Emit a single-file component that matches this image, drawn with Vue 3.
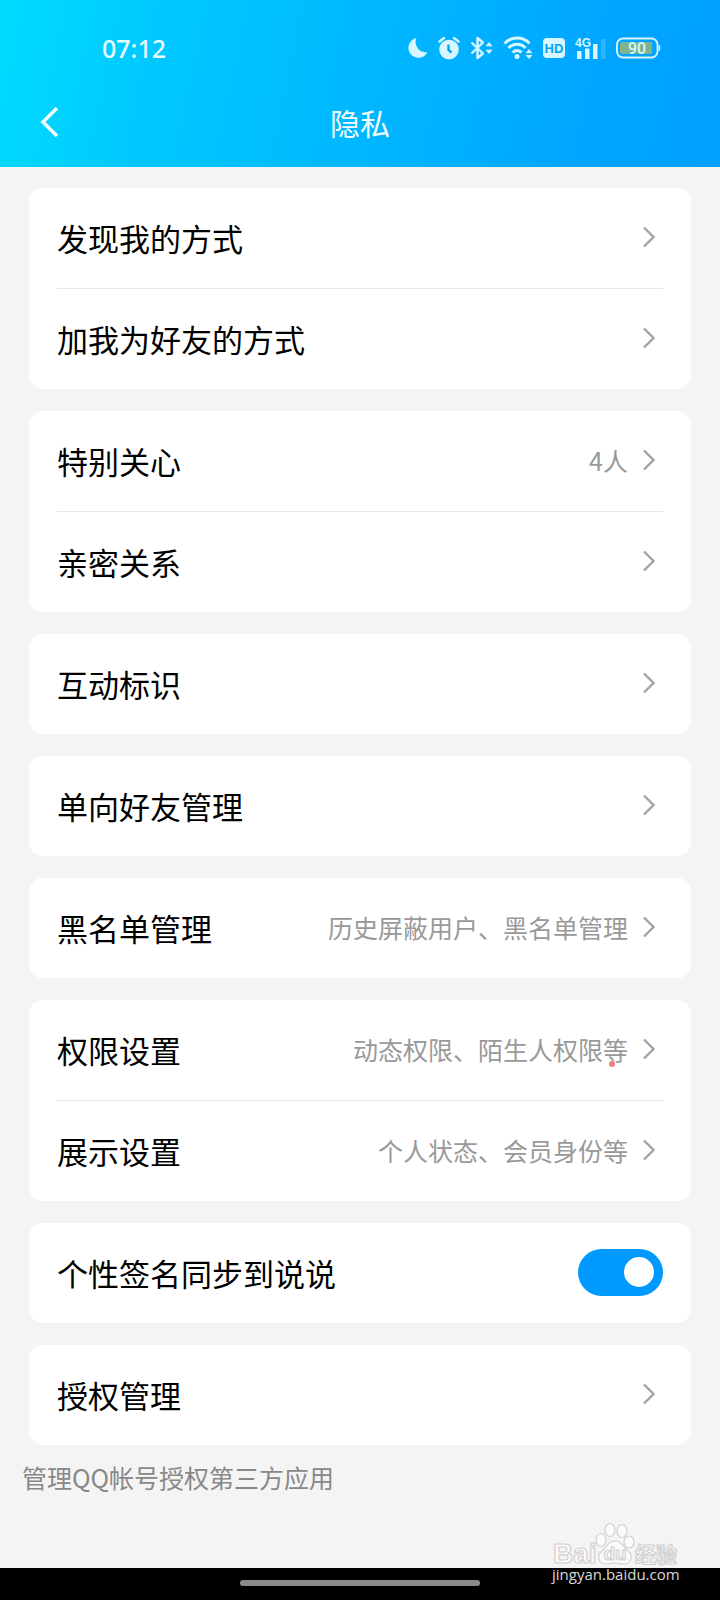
<template>
  <div class="page">
    <header class="header">
      <div class="status-bar">
        <span class="time">07:12</span>
        <div class="status-icons">
          <svg width="20" height="22" viewBox="0 0 20 22">
            <path d="M8.500 1A10 10 0 1 0 19.500 15 10 10 0 0 1 8.500 1Z" fill="currentColor" />
          </svg>
          <svg width="22" height="24" viewBox="0 0 22 24">
            <circle cx="11" cy="13.500" r="9.800" fill="currentColor" />
            <path d="M1.500 5.500 6 2M20.500 5.500 16 2" stroke="currentColor" stroke-width="2.400" stroke-linecap="round" />
            <path d="M10.500 8.500V14l3 2.500" fill="none" stroke="#00a9f0" stroke-width="2.400" />
          </svg>
          <svg width="23" height="24" viewBox="0 0 23 24">
            <path d="M1.500 6.500 13 17.500 7.500 22V2l5.500 4.500L1.500 17.500" fill="none" stroke="currentColor" stroke-width="2.400" stroke-linejoin="round" />
            <path d="m19 6 3.500 4.200h-7zM19 18l3.500-4.200h-7z" fill="currentColor" />
          </svg>
          <svg width="30" height="24" viewBox="0 0 30 24">
            <path d="M1.500 7.500a17 17 0 0 1 25 0M5.500 12a11.500 11.500 0 0 1 17 0M9.500 16.500a6 6 0 0 1 9 0" fill="none" stroke="currentColor" stroke-width="3" />
            <circle cx="14" cy="20.500" r="2.500" fill="currentColor" />
            <path d="m26 13 3.500 4.200h-7zM26 23l3.500-4h-7z" fill="currentColor" />
          </svg>
          <svg width="22" height="20" viewBox="0 0 22 20">
            <rect x="0" y="0" width="22" height="20" rx="4" fill="currentColor" />
            <text x="11" y="15" text-anchor="middle" class="hd-text">HD</text>
          </svg>
          <svg width="31" height="24" viewBox="0 0 31 24">
            <text x="0" y="11" class="net-text">4G</text>
            <path d="M2 15h4.500v8H2zM10 12.500h4.500V23H10zM18 8h4.500v15H18z" fill="currentColor" />
            <path d="M26 3h4.500v20H26z" fill="currentColor" opacity="0.200" />
          </svg>
          <svg width="45" height="22" viewBox="0 0 45 22">
            <rect x="1" y="1.500" width="40.500" height="19" rx="6" fill="none" stroke="currentColor" stroke-width="1.800" />
            <path d="M6 5h30v12H6a2 2 0 0 1-2-2V7a2 2 0 0 1 2-2Z" fill="#7cb48c" />
            <path d="M42.500 7.500c2.500.5 2.500 6.500 0 7z" fill="currentColor" />
            <text x="21" y="17" text-anchor="middle" class="battery-text">90</text>
          </svg>
        </div>
      </div>
      <nav class="nav-bar">
        <button type="button" class="back" aria-label="返回">
          <svg width="20" height="32" viewBox="0 0 20 32">
            <path d="M17 2 3 16l14 14" fill="none" stroke="currentColor" stroke-width="3.600" />
          </svg>
        </button>
        <h1>隐私</h1>
      </nav>
    </header>

    <main class="content">
      <section v-for="(group, i) in groups" :key="i" class="card">
        <template v-for="item in group" :key="item.title">
          <label v-if="item.toggle" class="row">
            <span class="title">{{ item.title }}</span>
            <input type="checkbox" class="switch" v-model="syncSignature" />
          </label>
          <a v-else href="#" class="row" @click.prevent>
            <span class="title">{{ item.title }}</span>
            <span class="value" :class="{ dotted: item.dot }">{{ item.value }}</span>
            <svg class="chevron" width="12" height="22" viewBox="0 0 12 22">
              <path d="m1 1.500 9.500 9.500L1 20.500" fill="none" stroke="currentColor" stroke-width="2.400" />
            </svg>
          </a>
        </template>
      </section>
      <p class="hint">管理QQ帐号授权第三方应用</p>
    </main>

    <footer class="home-bar">
      <span class="home-pill"></span>
    </footer>

    <div class="watermark">
      <svg width="132" height="50" viewBox="0 0 132 50">
        <g class="mark">
          <text x="1" y="41" class="mark-latin">Bai</text>
          <ellipse cx="49" cy="18" rx="5" ry="6.500" />
          <ellipse cx="58" cy="8" rx="5" ry="6.500" />
          <ellipse cx="70" cy="9" rx="5" ry="6.500" />
          <ellipse cx="77" cy="20" rx="5" ry="6" />
          <path d="M63 19c7 0 8 6 13 10 6 5 3 13-4 13-4 0-6-1-9-1s-5 1-9 1c-7 0-10-8-4-13 5-4 6-10 13-10Z" />
          <text x="63" y="38" text-anchor="middle" class="mark-du">du</text>
          <text x="83" y="40" class="mark-cjk">经验</text>
        </g>
      </svg>
      <span class="mark-url">jingyan.baidu.com</span>
    </div>
  </div>
</template>

<script setup>
import { ref } from 'vue'

const syncSignature = ref(true)

const groups = [
  [{ title: '发现我的方式' }, { title: '加我为好友的方式' }],
  [{ title: '特别关心', value: '4人' }, { title: '亲密关系' }],
  [{ title: '互动标识' }],
  [{ title: '单向好友管理' }],
  [{ title: '黑名单管理', value: '历史屏蔽用户、黑名单管理' }],
  [
    { title: '权限设置', value: '动态权限、陌生人权限等', dot: true },
    { title: '展示设置', value: '个人状态、会员身份等' }
  ],
  [{ title: '个性签名同步到说说', toggle: true }],
  [{ title: '授权管理' }]
]
</script>

<style>
body {
  background: #f4f4f4;
}
</style>

<style scoped>
.page {
  position: relative;
  display: flex;
  flex-direction: column;
  min-height: 100vh;
  background: #f4f4f4;
  font-family: "Noto Sans CJK SC", sans-serif;
}

.header {
  padding-top: 20px;
  background: linear-gradient(102deg, #00dcff 0%, #00c8ff 22%, #00a5ff 82%, #00a0ff 100%);
  color: #d8f6ff;
}

.status-bar {
  display: flex;
  align-items: center;
  justify-content: space-between;
  height: 56px;
  padding: 0 59px 0 102px;
}

.time {
  color: #e8fcff;
  font-family: "Noto Sans", sans-serif;
  font-size: 25px;
  font-weight: 500;
}

.status-icons {
  display: flex;
  align-items: center;
  gap: 10px;
}

.hd-text {
  font: bold 13px "Liberation Sans", sans-serif;
  fill: #00a5f5;
}

.net-text {
  font: bold 12px "Liberation Sans", sans-serif;
  fill: currentColor;
}

.battery-text {
  font: 500 16px Roboto, sans-serif;
  fill: currentColor;
}

.nav-bar {
  display: grid;
  grid-template-columns: 60px 1fr 60px;
  align-items: center;
  height: 91px;
}

.back {
  display: flex;
  justify-content: flex-end;
  padding: 0;
  border: none;
  background: none;
  color: #f0fdff;
  cursor: pointer;
}

h1 {
  margin: 0;
  color: #f0fdff;
  font-size: 30px;
  font-weight: 400;
  line-height: 40px;
  text-align: center;
}

.content {
  display: flex;
  flex: 1;
  flex-direction: column;
  gap: 22px;
  padding: 21px 29px;
}

.card {
  padding: 0 28px;
  border-radius: 14px;
  background: #fff;
}

.row {
  display: flex;
  align-items: center;
  box-sizing: content-box;
  height: 98px;
  padding-bottom: 2px;
  color: #000;
  text-decoration: none;
  cursor: pointer;
}

.row + .row {
  border-top: 1px solid #e8e8e8;
}

.title {
  flex: 1;
  font-size: 31px;
  font-weight: 400;
}

.value {
  position: relative;
  color: #999;
  font-size: 25px;
  font-weight: 400;
}

.dotted::after {
  content: "";
  position: absolute;
  right: 13px;
  bottom: 0;
  width: 6px;
  height: 6px;
  border-radius: 50%;
  background: #ec8080;
}

.chevron {
  margin: 0 8px 0 15px;
  color: #a3a3a3;
}

.switch {
  display: flex;
  align-items: center;
  justify-content: flex-end;
  width: 85px;
  height: 47px;
  margin: 0;
  padding: 0 9px;
  border-radius: 24px;
  background: #ccc;
  appearance: none;
  cursor: pointer;
}

.switch:checked {
  background: #0099ff;
}

.switch::before {
  content: "";
  width: 30px;
  height: 30px;
  border-radius: 50%;
  background: #fff;
}

.switch:not(:checked) {
  justify-content: flex-start;
}

.hint {
  margin: -8px -7px 0;
  color: #888;
  font-size: 25px;
  font-weight: 400;
  line-height: 36px;
}

.home-bar {
  display: flex;
  justify-content: center;
  padding: 12px 0 14px;
  background: #000;
}

.home-pill {
  width: 33.33%;
  height: 6px;
  border-radius: 3px;
  background: #8a8a8a;
}

.watermark {
  position: absolute;
  right: 36px;
  bottom: 16px;
  display: flex;
  flex-direction: column;
  width: 132px;
}

.watermark svg {
  margin-bottom: -8px;
}

.mark {
  fill: #fbfbfb;
  stroke: #d0d0d0;
  stroke-width: 1.2px;
}

.mark-latin {
  font: bold 28px "Liberation Sans", sans-serif;
}

.mark-du {
  font: bold 19px "Liberation Sans", sans-serif;
}

.mark-cjk {
  font: bold 21px "Noto Sans CJK SC", sans-serif;
}

.mark-url {
  color: #d8d8d8;
  font-family: "Open Sans", sans-serif;
  font-size: 15px;
  line-height: 20px;
}
</style>
